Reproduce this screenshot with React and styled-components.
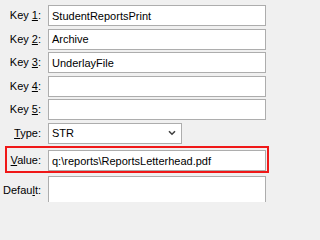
import React from 'react';
import styled, { createGlobalStyle } from 'styled-components';

const GlobalStyle = createGlobalStyle`
  html, body {
    margin: 0;
    padding: 0;
    background: #f0f0f0;
    overflow: hidden;
  }
  body {
    font-family: "Liberation Sans", Arial, sans-serif;
    font-size: 11px;
    color: #000;
  }
`;

// 폼 전체
const Form = styled.div`
  width: 271px;
  height: 202px;
  box-sizing: border-box;
  padding: 5px 5px 0 0;
  display: flex;
  flex-direction: column;
  gap: 2.5px;
  background: #f0f0f0;
`;

// 한 줄 (라벨 + 입력칸), flagged 면 빨간 테두리
const Row = styled.div`
  display: flex;
  align-items: center;
  gap: 7px;
  ${({ $flagged }) =>
    $flagged &&
    `
    margin: 0 -3px 0 5px;
    border: 2px solid #f01818;
    padding: 2px 1px 0 0;
  `}
`;

const Label = styled.label`
  flex: 0 0 ${({ $inset }) => 41 - $inset}px;
  text-align: right;
  white-space: nowrap;
  line-height: 13px;
  u {
    text-decoration: underline;
    text-underline-offset: 1px;
  }
`;

const Field = styled.div`
  flex: ${({ $width }) => ($width ? `0 0 ${$width}px` : '1 1 auto')};
  height: ${({ $tall }) => ($tall ? 30 : 21)}px;
  box-sizing: border-box;
  border: 1px solid #adadad;
  background: #fff;
  padding: 0 3px;
  display: flex;
  align-items: ${({ $tall }) => ($tall ? 'flex-start' : 'center')};
  white-space: nowrap;
  overflow: hidden;
`;

const Combo = styled(Field)`
  justify-content: space-between;
  padding-right: 5px;
`;

const Chevron = () => (
  <svg width="8" height="6" viewBox="0 0 8 6">
    <path d="M1 1.2 L4 4.2 L7 1.2" fill="none" stroke="#404040" strokeWidth="1.6" />
  </svg>
);

const rows = [
  { key: '1', value: 'StudentReportsPrint' },
  { key: '2', value: 'Archive' },
  { key: '3', value: 'UnderlayFile' },
  { key: '4', value: '' },
  { key: '5', value: '' },
];

const App = () => {
  return (
    <>
      <GlobalStyle />
      <Form>
        {rows.map((r) => (
          <Row key={r.key}>
            <Label $inset={0}>Key <u>{r.key}</u>:</Label>
            <Field>{r.value}</Field>
          </Row>
        ))}
        <Row>
          <Label $inset={0}><u>T</u>ype:</Label>
          <Combo $width={134}>
            STR
            <Chevron />
          </Combo>
        </Row>
        <Row $flagged>
          <Label $inset={7}><u>V</u>alue:</Label>
          <Field>q:\reports\ReportsLetterhead.pdf</Field>
        </Row>
        <Row>
          <Label $inset={0}>Defau<u>l</u>t:</Label>
          <Field $tall />
        </Row>
      </Form>
    </>
  );
};

export default App;
